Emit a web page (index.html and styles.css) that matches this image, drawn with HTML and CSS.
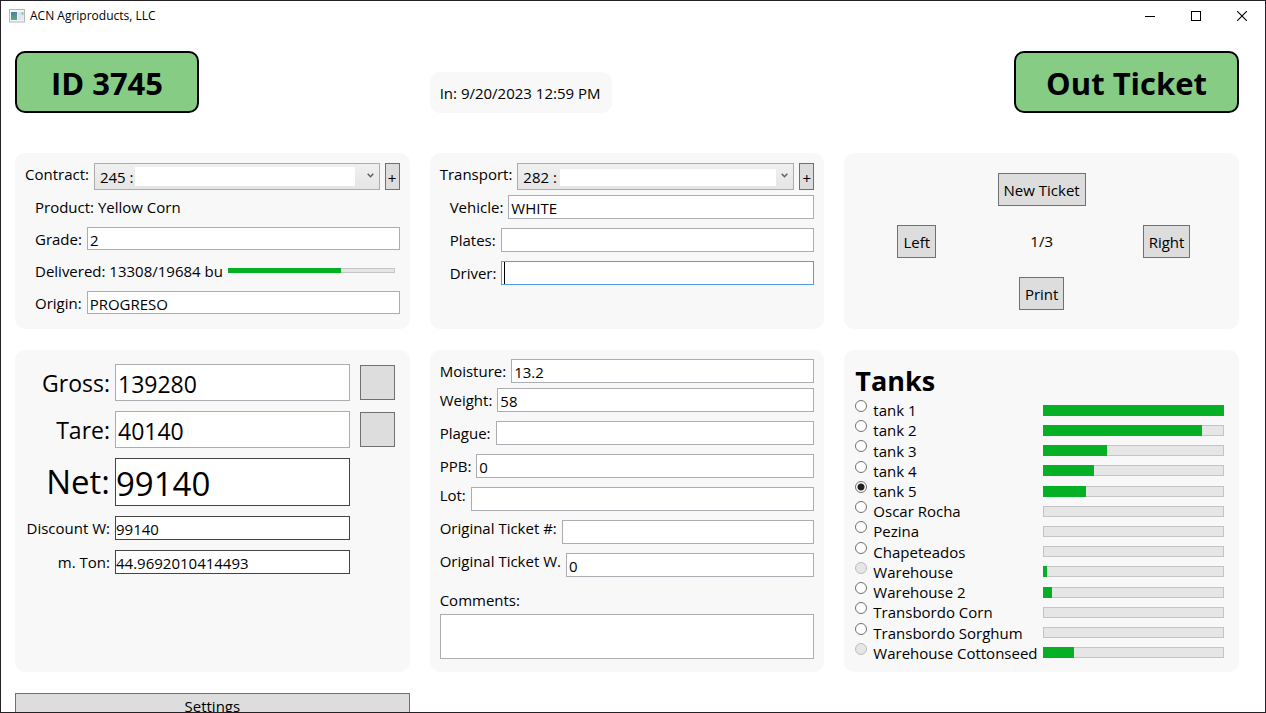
FILE: index.html
```html
<!DOCTYPE html>
<html lang="en">
<head>
<meta charset="utf-8">
<title>ACN Agriproducts, LLC</title>
<link rel="stylesheet" href="styles.css">
</head>
<body>
<div class="window">
  <header class="titlebar">
    <svg class="app-icon" width="16" height="14" viewBox="0 0 16 14" aria-hidden="true">
      <defs><linearGradient id="pane" x1="0" y1="0" x2="0" y2="1"><stop offset="0" stop-color="#4a7f9c"/><stop offset="1" stop-color="#5fa787"/></linearGradient></defs>
      <rect x=".5" y=".5" width="15" height="12.5" fill="#f4f4f6" stroke="#b4b7bd"/>
      <rect x="2" y="3" width="6" height="8" fill="url(#pane)"/>
      <rect x="9" y="3" width="3" height="8" fill="#e2e4ea"/>
      <rect x="12.500" y="3" width="2" height="3" fill="#8fc3a4"/>
      <rect x="12.500" y="6" width="2" height="5" fill="#e2e4ea"/>
    </svg>
    <span class="app-title">ACN Agriproducts, LLC</span>
    <div class="window-buttons">
      <button type="button" aria-label="Minimize"><svg width="10" height="10" viewBox="0 0 10 10"><path d="M0 5.500H10" stroke="#000"/></svg></button>
      <button type="button" aria-label="Maximize"><svg width="10" height="10" viewBox="0 0 10 10"><rect x=".5" y=".5" width="9" height="9" fill="none" stroke="#000"/></svg></button>
      <button type="button" aria-label="Close"><svg width="10" height="10" viewBox="0 0 10 10"><path d="M0 0L10 10M10 0L0 10" stroke="#000" stroke-width="1.100"/></svg></button>
    </div>
  </header>

  <main class="content">
    <div class="summary">
      <h1 class="badge">ID 3745</h1>
      <div class="stamp">In: 9/20/2023 12:59 PM</div>
      <div class="badge badge-end">Out Ticket</div>
    </div>

    <div class="cards">
      <section class="card contract">
        <div class="row combo-row">
          <label for="contract">Contract:</label>
          <div class="combo">
            <select id="contract"><option>245 :</option></select>
            <span class="mask mask-contract"></span>
            <svg class="chevron" width="7" height="5" viewBox="0 0 7 5"><path d="M.7.8L3.500 3.700L6.300.8" fill="none" stroke="#606060" stroke-width="1.500"/></svg>
          </div>
          <button type="button" class="button add" aria-label="Add contract">+</button>
        </div>
        <div class="fields">
          <div class="product">Product: Yellow Corn</div>
          <div class="row"><label for="grade">Grade:</label><input id="grade" class="field" value="2"></div>
          <div class="row delivered"><label for="delivered">Delivered: 13308/19684 bu</label><progress id="delivered" class="meter thin" max="100" value="67.6"></progress></div>
          <div class="row"><label for="origin">Origin:</label><input id="origin" class="field" value="PROGRESO"></div>
        </div>
      </section>

      <section class="card transport">
        <div class="row combo-row">
          <label for="transport">Transport:</label>
          <div class="combo">
            <select id="transport"><option>282 :</option></select>
            <span class="mask mask-transport"></span>
            <svg class="chevron" width="7" height="5" viewBox="0 0 7 5"><path d="M.7.8L3.500 3.700L6.300.8" fill="none" stroke="#606060" stroke-width="1.500"/></svg>
          </div>
          <button type="button" class="button add" aria-label="Add transport">+</button>
        </div>
        <div class="fields">
          <div class="row"><label for="vehicle">Vehicle:</label><input id="vehicle" class="field" value="WHITE"></div>
          <div class="row"><label for="plates">Plates:</label><input id="plates" class="field"></div>
          <div class="row"><label for="driver">Driver:</label><input id="driver" class="field active"></div>
        </div>
      </section>

      <nav class="card pager">
        <button type="button" class="button new">New Ticket</button>
        <button type="button" class="button previous">Left</button>
        <span class="count">1/3</span>
        <button type="button" class="button next">Right</button>
        <button type="button" class="button print">Print</button>
      </nav>

      <section class="card weights">
        <label class="large" for="gross">Gross:</label><input id="gross" class="field large" value="139280"><button type="button" class="button read" aria-label="Read gross weight"></button>
        <label class="large" for="tare">Tare:</label><input id="tare" class="field large" value="40140"><button type="button" class="button read" aria-label="Read tare weight"></button>
        <label class="huge" for="net">Net:</label><input id="net" class="field result huge" value="99140" readonly>
        <label for="discount">Discount W:</label><input id="discount" class="field result" value="99140" readonly>
        <label for="ton">m. Ton:</label><input id="ton" class="field result" value="44.9692010414493" readonly>
      </section>

      <section class="card quality">
        <div class="row first"><label for="moisture">Moisture:</label><input id="moisture" class="field" value="13.2"></div>
        <div class="fields">
          <div class="row"><label for="weight">Weight:</label><input id="weight" class="field" value="58"></div>
          <div class="row"><label for="plague">Plague:</label><input id="plague" class="field"></div>
          <div class="row"><label for="ppb">PPB:</label><input id="ppb" class="field" value="0"></div>
          <div class="row raised"><label for="lot">Lot:</label><input id="lot" class="field"></div>
          <div class="row raised"><label for="ticket-no">Original Ticket #:</label><input id="ticket-no" class="field"></div>
          <div class="row raised"><label for="ticket-w">Original Ticket W.</label><input id="ticket-w" class="field" value="0"></div>
        </div>
        <label class="comments-label" for="comments">Comments:</label>
        <textarea id="comments" class="comments"></textarea>
      </section>

      <section class="card tanks">
        <h2>Tanks</h2>
        <div class="tank-list">
          <div class="tank"><input type="radio" name="tank" id="t1"><label for="t1">tank 1</label><progress class="meter" max="100" value="100" aria-label="tank 1"></progress></div>
          <div class="tank"><input type="radio" name="tank" id="t2"><label for="t2">tank 2</label><progress class="meter" max="100" value="88" aria-label="tank 2"></progress></div>
          <div class="tank"><input type="radio" name="tank" id="t3"><label for="t3">tank 3</label><progress class="meter" max="100" value="35.400" aria-label="tank 3"></progress></div>
          <div class="tank"><input type="radio" name="tank" id="t4"><label for="t4">tank 4</label><progress class="meter" max="100" value="28.200" aria-label="tank 4"></progress></div>
          <div class="tank"><input type="radio" name="tank" id="t5" checked><label for="t5">tank 5</label><progress class="meter" max="100" value="23.700" aria-label="tank 5"></progress></div>
          <div class="tank"><input type="radio" name="tank" id="t6"><label for="t6">Oscar Rocha</label><progress class="meter" max="100" value="0" aria-label="Oscar Rocha"></progress></div>
          <div class="tank"><input type="radio" name="tank" id="t7"><label for="t7">Pezina</label><progress class="meter" max="100" value="0" aria-label="Pezina"></progress></div>
          <div class="tank"><input type="radio" name="tank" id="t8"><label for="t8">Chapeteados</label><progress class="meter" max="100" value="0" aria-label="Chapeteados"></progress></div>
          <div class="tank"><input type="radio" name="tank" id="t9" disabled><label for="t9">Warehouse</label><progress class="meter" max="100" value="2.200" aria-label="Warehouse"></progress></div>
          <div class="tank"><input type="radio" name="tank" id="t10"><label for="t10">Warehouse 2</label><progress class="meter" max="100" value="5" aria-label="Warehouse 2"></progress></div>
          <div class="tank"><input type="radio" name="tank" id="t11"><label for="t11">Transbordo Corn</label><progress class="meter" max="100" value="0" aria-label="Transbordo Corn"></progress></div>
          <div class="tank"><input type="radio" name="tank" id="t12"><label for="t12">Transbordo Sorghum</label><progress class="meter" max="100" value="0" aria-label="Transbordo Sorghum"></progress></div>
          <div class="tank"><input type="radio" name="tank" id="t13" disabled><label for="t13">Warehouse Cottonseed</label><progress class="meter" max="100" value="17" aria-label="Warehouse Cottonseed"></progress></div>
        </div>
      </section>

      <button type="button" class="button settings">Settings</button>
    </div>
  </main>
</div>
</body>
</html>
```

FILE: styles.css
```css
* { box-sizing: border-box; }

body {
  margin: 0;
  background: #fff;
  color: #000;
  font: 15px/20px "Segoe UI", "Open Sans", "Noto Sans", sans-serif;
}

button, input, select, textarea {
  margin: 0;
  color: inherit;
  font: inherit;
  border-radius: 0;
}

h1, h2 { margin: 0; }

.window {
  height: 100vh;
  overflow: hidden;
  border: 1px solid #232125;
}

/* Title bar */
.titlebar {
  display: flex;
  align-items: center;
  height: 29px;
  padding-left: 8px;
  font-size: 12px;
}

.app-title { margin-left: 5px; }

.window-buttons {
  display: flex;
  margin-left: auto;
}

.window-buttons button {
  display: grid;
  place-items: center;
  width: 46px;
  height: 28px;
  padding: 0;
  border: 0;
  background: none;
}

/* Page */
.content { padding: 21px 26px 0 14px; }

.summary {
  display: grid;
  grid-template-columns: repeat(3, 1fr);
  gap: 20px;
  align-items: end;
  margin-bottom: 40px;
}

.badge {
  justify-self: start;
  min-width: 184px;
  padding: 9px 30px 7px;
  border: 2px solid #000;
  border-radius: 10px;
  background: #86cc84;
  font-size: 31px;
  font-weight: 700;
  line-height: 42px;
  text-align: center;
}

.badge-end { justify-self: end; }

.stamp {
  justify-self: start;
  padding: 11px 12px 10px 10px;
  border-radius: 10px;
  background: #f8f8f8;
}

.cards {
  display: grid;
  grid-template-columns: repeat(3, 1fr);
  gap: 21px 20px;
}

.card {
  min-width: 0;
  border-radius: 10px;
  background: #f8f8f8;
}

/* Form rows */
.row {
  display: flex;
  align-items: center;
  gap: 5px;
}

.row label { white-space: nowrap; }

.row .field { flex: 1; }

.field {
  min-width: 0;
  width: 100%;
  height: 24px;
  padding: 2px 2px 0;
  border: 1px solid #abadb3;
  background: #fff;
  outline: none;
}

.field.active {
  border-color: #569de5;
  background: linear-gradient(#000, #000) 2px 0 / 1px 100% no-repeat #fff;
}

.fields {
  display: grid;
  gap: 9px;
}

.button {
  padding: 0 5px;
  border: 1px solid #707070;
  background: #ddd;
}

.combo-row { align-items: flex-start; }
.combo-row label { line-height: 22px; }

.combo {
  position: relative;
  flex: 1;
  min-width: 0;
}

.combo select {
  display: block;
  width: 100%;
  height: 27px;
  padding: 1px 5px 0;
  border: 1px solid #acacac;
  background: linear-gradient(#f0f0f0, #e5e5e5);
  appearance: none;
}

.chevron {
  position: absolute;
  top: 10px;
  right: 6px;
}

.mask {
  position: absolute;
  background: #fff;
}

.mask-contract { inset: 4px 25px 4px 41px; }
.mask-transport { inset: 6px 18px 4px 43px; }

.add {
  width: 15px;
  height: 27px;
  padding: 2px 0 0;
  text-align: center;
}

.contract, .transport { padding: 10px 10px 15px; }
.contract .fields, .transport .fields { padding-left: 10px; }

.contract .combo-row { margin-bottom: 7px; }
.contract .fields .row, .contract .field { height: 23px; }
.product { line-height: 21px; }
.delivered { padding-right: 5px; }

.transport .combo-row { margin-bottom: 5px; }

/* Meters */
.meter {
  display: block;
  width: 100%;
  height: 11px;
  border: 0;
  appearance: none;
}

.meter.thin {
  flex: 1;
  min-width: 0;
  height: 5px;
}

.meter::-webkit-progress-bar {
  background: #e6e6e6;
  box-shadow: inset 0 0 0 1px #c4c4c4;
}

.meter::-webkit-progress-value { background: #06b025; }

/* Pager */
.pager {
  display: grid;
  grid-template: repeat(3, 1fr) / repeat(3, 1fr);
  grid-template-areas: ". new ." "previous count next" ". print .";
  place-items: center;
  padding: 10px;
}

.pager .button { height: 33px; padding-top: 1px; }
.new { grid-area: new; }
.previous { grid-area: previous; }
.count { grid-area: count; }
.next { grid-area: next; }
.print { grid-area: print; }

/* Weights */
.weights {
  display: grid;
  grid-template-columns: 85px 1fr 35px;
  column-gap: 5px;
  row-gap: 10px;
  align-content: start;
  align-items: center;
  padding: 14px 15px 14px 10px;
}

.weights label {
  grid-column: 1;
  text-align: right;
  white-space: nowrap;
}

.weights .field {
  grid-column: 2;
  justify-self: start;
  width: calc(100% - 5px);
}

.weights .large { font-size: 23px; }
.weights .huge { font-size: 33px; line-height: 46px; }
.weights .field.large { height: 37px; }
.weights .field.huge { height: 48px; }
.weights .field.result { padding-left: 0; border-color: #444; }

.read { height: 35px; }

/* Quality */
.quality { padding: 9px 10px 13px; }
.quality .first { margin-bottom: 5px; }

.raised { align-items: flex-start; }
.raised label { line-height: 16px; }

.comments-label {
  display: block;
  margin: 13px 0 4px;
}

.comments {
  display: block;
  width: 100%;
  height: 45px;
  border: 1px solid #abadb3;
  background: #fff;
  resize: none;
}

/* Tanks */
.tanks {
  display: flex;
  flex-direction: column;
  padding: 12px 15px 9px 11px;
}

.tanks h2 {
  font-size: 27px;
  line-height: 38px;
}

.tank-list {
  display: grid;
  flex: 1;
  grid-auto-rows: 1fr;
}

.tank {
  display: grid;
  grid-template-columns: 12px 164px 1fr;
  column-gap: 6px;
  align-items: center;
}

.tank label { white-space: nowrap; }

.tank input {
  align-self: start;
  width: 12px;
  height: 12px;
  border: 1px solid #707070;
  border-radius: 50%;
  background: #fff;
  appearance: none;
}

.tank input:checked { background: radial-gradient(circle, #212121 3px, #fff 4px); }

.tank input:disabled {
  border-color: #bcbcbc;
  background: #e6e6e6;
}

.settings {
  height: 26px;
  line-height: 24px;
}
```
